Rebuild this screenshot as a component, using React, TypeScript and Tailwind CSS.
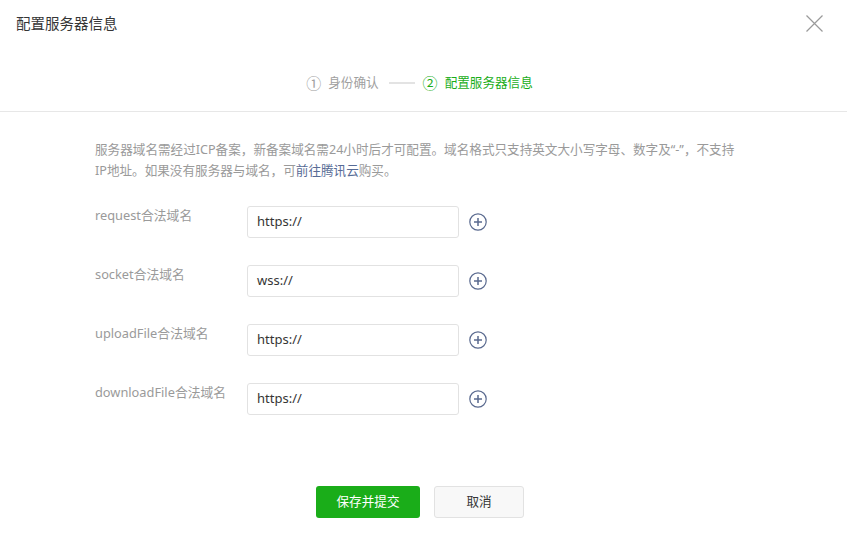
import * as React from "react";

const domains = [
  { label: "request合法域名", value: "https://" },
  { label: "socket合法域名", value: "wss://" },
  { label: "uploadFile合法域名", value: "https://" },
  { label: "downloadFile合法域名", value: "https://" },
];

const PlusCircle: React.FC = () => (
  <svg viewBox="0 0 18 18" className="h-[18px] w-[18px]" fill="none" stroke="#5a6a8f">
    <circle cx="9" cy="9" r="8.2" strokeWidth="1.2" />
    <path d="M9 5v8M5 9h8" strokeWidth="1.5" />
  </svg>
);

export default function App() {
  return (
    <div
      className="w-[847px] h-[538px] bg-white text-[#353535]"
      style={{ fontFamily: '"Noto Sans", "Noto Sans CJK SC", sans-serif' }}
    >
      {/* header */}
      <div className="h-[46px] flex items-center justify-between pl-4 pr-[24px]">
        <span className="text-[14.5px] leading-[18px]">配置服务器信息</span>
        <button className="h-[17px] w-[17px]">
          <svg viewBox="0 0 17 17" className="h-[17px] w-[17px]" stroke="#9a9a9a" strokeWidth="1.2">
            <path d="M0.5 0.5l16 16M16.5 0.5l-16 16" />
          </svg>
        </button>
      </div>

      {/* steps */}
      <div className="h-[66px] border-b border-[#e7e7e7] flex justify-center pt-[28px] pr-[8px]">
        <div className="flex items-center h-[18px] text-[12.6px] leading-[18px]">
          <span className="text-[#a0a0a0] text-[15px]">①</span>
          <span className="ml-[7px] text-[#a0a0a0]">身份确认</span>
          <span className="ml-[10px] w-[26px] h-[2px] bg-[#e3e3e3]" />
          <span className="ml-[8px] text-[#1aad19] text-[15px]">②</span>
          <span className="ml-[7px] text-[#1aad19]">配置服务器信息</span>
        </div>
      </div>

      {/* body */}
      <div className="pl-[95px] pt-[27px]">
        <p className="w-[648px] text-[12.6px] leading-[21px] text-[#9a9a9a]">
          服务器域名需经过ICP备案，新备案域名需24小时后才可配置。域名格式只支持英文大小写字母、数字及“-”，不支持IP地址。如果没有服务器与域名，可
          <a className="text-[#576b95]">前往腾讯云</a>
          购买。
        </p>

        <div className="mt-[25px] flex flex-col gap-[27px]">
          {domains.map((d) => (
            <div key={d.label} className="flex items-start">
              <label className="w-[152px] text-[12.8px] leading-[18px] text-[#9a9a9a]">{d.label}</label>
              <div className="flex items-center">
                <div className="w-[212px] h-[32px] border border-[#e2e2e2] rounded-[3px] flex items-center px-[9px] text-[13px] text-[#353535]">
                  {d.value}
                </div>
                <span className="ml-[10px] flex">
                  <PlusCircle />
                </span>
              </div>
            </div>
          ))}
        </div>
      </div>

      {/* footer */}
      <div className="mt-[71px] flex justify-center pr-[7px] gap-[14px]">
        <button className="w-[104px] h-[32px] rounded-[3px] bg-[#1aad19] text-white text-[12.6px]">
          保存并提交
        </button>
        <button className="w-[90px] h-[32px] rounded-[3px] border border-[#e2e2e2] bg-[#f8f8f8] text-[12.6px] text-[#353535]">
          取消
        </button>
      </div>
    </div>
  );
}
